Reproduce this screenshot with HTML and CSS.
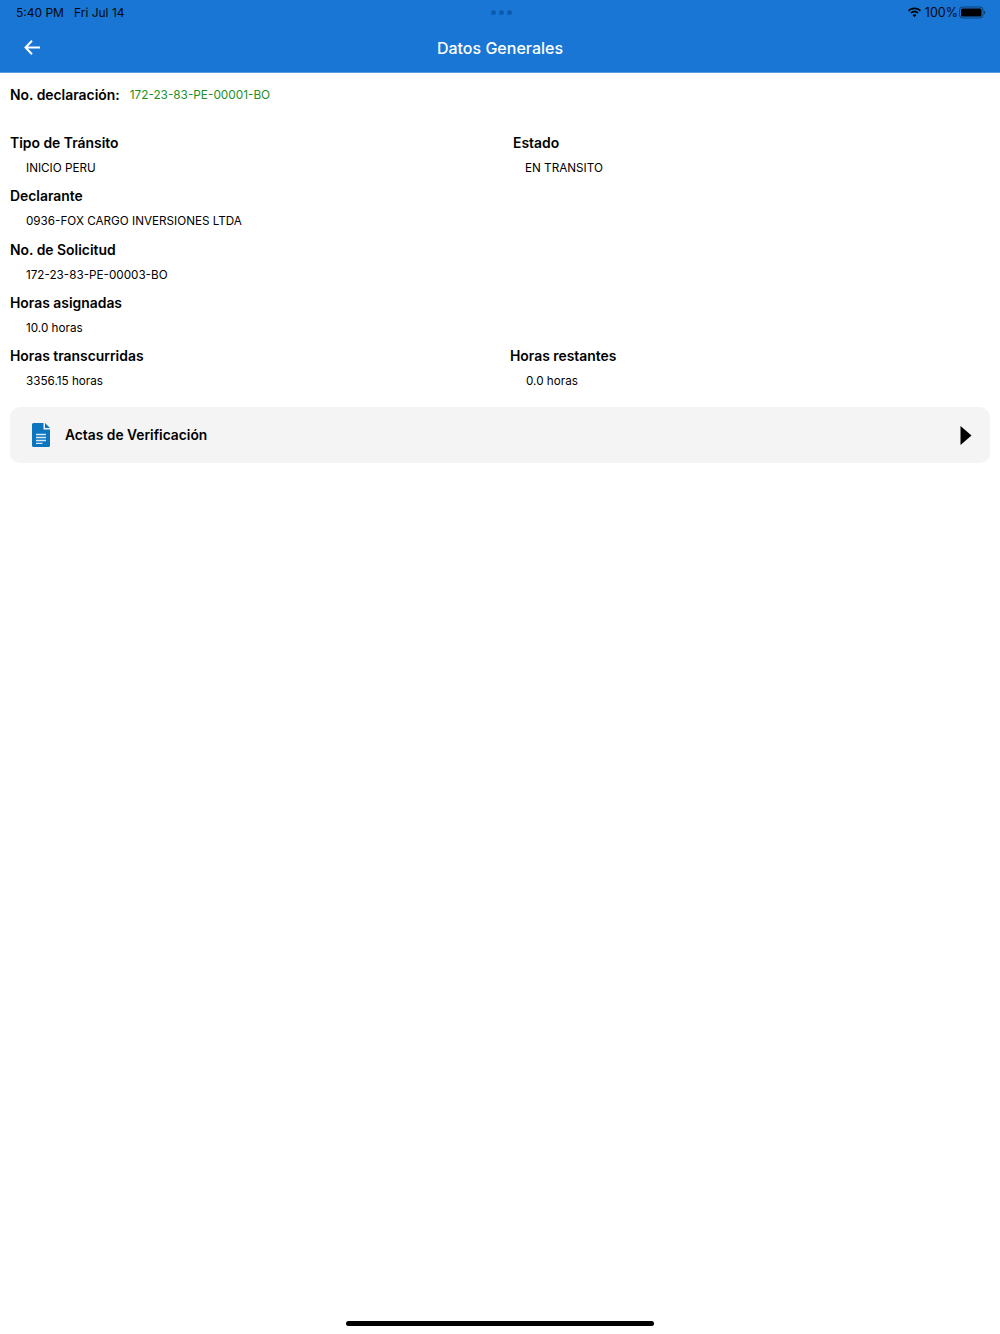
FILE: index.html
```html
<!DOCTYPE html>
<html lang="es">
<head>
<meta charset="utf-8">
<title>Datos Generales</title>
<link rel="stylesheet" href="styles.css">
</head>
<body>
<div class="page">
  <header class="appbar">
    <div class="status">
      <div class="status-left"><span>5:40 PM</span><span>Fri Jul 14</span></div>
      <div class="dots"><i></i><i></i><i></i></div>
      <div class="status-right">
        <svg class="wifi" width="15" height="11" viewBox="0 0 15 11"><path d="M7.500 2.200c2.100 0 4 .8 5.400 2.200l1.100-1.200C12.300 1.500 10 .5 7.500.5S2.700 1.500 1 3.200l1.100 1.200C3.500 3 5.400 2.200 7.500 2.200z M7.500 5.400c1.200 0 2.300.5 3.100 1.200l1.100-1.200c-1.100-1-2.600-1.700-4.200-1.700s-3.100.7-4.200 1.700l1.100 1.200c.8-.7 1.900-1.200 3.100-1.200z M7.500 7.300c-.8 0-1.400.3-1.900.8l1.900 2.100 1.900-2.100c-.5-.5-1.100-.8-1.900-.8z" fill="#000"/></svg>
        <span class="pct">100%</span>
        <svg class="battery" width="27" height="13" viewBox="0 0 27 13"><rect x="0.500" y="1" width="23.500" height="11" rx="3" fill="none" stroke="#000" stroke-opacity=".45"/><rect x="2" y="2.500" width="20.500" height="8" rx="1.500" fill="#000"/><path d="M25 4.700c.8.300 1.300 1 1.300 1.800s-.5 1.500-1.300 1.800z" fill="#000" fill-opacity=".5"/></svg>
      </div>
    </div>
    <div class="toolbar">
      <svg class="back" width="16" height="15" viewBox="0 0 16 15"><path d="M8 .8 1.500 7.500 8 14.200M2 7.500h14" fill="none" stroke="#fff" stroke-width="2"/></svg>
      <h1>Datos Generales</h1>
    </div>
  </header>

  <main class="content">
    <div class="decl">
      <span class="decl-label">No. declaración:</span>
      <span class="decl-value">172-23-83-PE-00001-BO</span>
    </div>

    <div class="row">
      <div class="field"><div class="label">Tipo de Tránsito</div><div class="value">INICIO PERU</div></div>
      <div class="field field-estado"><div class="label">Estado</div><div class="value">EN TRANSITO</div></div>
    </div>
    <div class="field"><div class="label">Declarante</div><div class="value">0936-FOX CARGO INVERSIONES LTDA</div></div>
    <div class="field"><div class="label">No. de Solicitud</div><div class="value">172-23-83-PE-00003-BO</div></div>
    <div class="field"><div class="label">Horas asignadas</div><div class="value">10.0 horas</div></div>
    <div class="row">
      <div class="field"><div class="label">Horas transcurridas</div><div class="value">3356.15 horas</div></div>
      <div class="field"><div class="label">Horas restantes</div><div class="value">0.0 horas</div></div>
    </div>

    <div class="card">
      <svg class="doc" width="18" height="24" viewBox="0 0 18 24"><path d="M1.500 0H11.500V6.500H18V22.500A1.500 1.500 0 0 1 16.500 24H1.500A1.500 1.500 0 0 1 0 22.500V1.500A1.500 1.500 0 0 1 1.500 0Z" fill="#0b76bd"/><path d="M13 0 18 5H13Z" fill="#0b76bd"/><path d="M4 11.500H14M4 14.500H14M4 17.500H14M4 20.300H10.500" stroke="#d5e8f5" stroke-width="1.300"/></svg>
      <span class="card-title">Actas de Verificación</span>
      <svg class="chevron" width="12" height="19" viewBox="0 0 12 19"><path d="M0.500 0 11.500 9.500 0.500 19Z" fill="#000"/></svg>
    </div>
  </main>

  <div class="home"></div>
</div>
</body>
</html>
```
FILE: styles.css
```css
* { box-sizing: border-box; }
html, body { margin: 0; padding: 0; background: #fff; }
body { font-family: Inter, "Noto Sans", sans-serif; color: #000; }
.page { width: 1000px; height: 1334px; display: flex; flex-direction: column; overflow: hidden; }

.appbar { background: #1976d4; height: 73px; flex: none; border-bottom: 1px solid #5b9ce0; }
.status { height: 24px; padding: 0 14px 0 16px; display: grid; grid-template-columns: 1fr auto 1fr; align-items: center; font-size: 12px; color: #05080c; }
.status-left { display: flex; gap: 10px; }
.dots { display: flex; gap: 3px; }
.dots i { width: 5px; height: 5px; border-radius: 50%; background: #0c5cb0; }
.status-right { display: flex; justify-content: flex-end; align-items: center; gap: 3px; }
.pct { font-size: 12.500px; margin-right: -2px; }
.toolbar { height: 48px; display: flex; align-items: center; justify-content: center; position: relative; }
.toolbar h1 { margin: 0; font-size: 16px; font-weight: 500; color: #fff; }
.back { position: absolute; left: 24px; top: 16px; }

.content { padding: 0 10px; flex: 1; }
.decl { display: flex; align-items: center; height: 44px; gap: 10px; margin-bottom: 3px; }
.decl-label { font-size: 13.900px; font-weight: 600; }
.decl-value { font-size: 11.800px; color: #1d8f1f; }

.row { display: grid; grid-template-columns: 490px 1fr; column-gap: 10px; }
.field { height: 53.250px; padding-top: 15px; }
.label { font-size: 13.900px; font-weight: 600; line-height: 17px; }
.value { font-size: 11.700px; line-height: 15px; margin-top: 9px; padding-left: 16px; }
.field-estado { padding-left: 3px; }
.field-estado .value { padding-left: 12px; }

.card { margin-top: 21px; height: 56px; background: #f4f4f4; border-radius: 10px; display: flex; align-items: center; padding: 0 18px 0 22px; }
.card-title { font-size: 13.800px; font-weight: 600; margin-left: 15px; }
.chevron { margin-left: auto; }

.home { flex: none; width: 308px; height: 5px; border-radius: 3px; background: #000; margin: 0 auto 8px; }
```
